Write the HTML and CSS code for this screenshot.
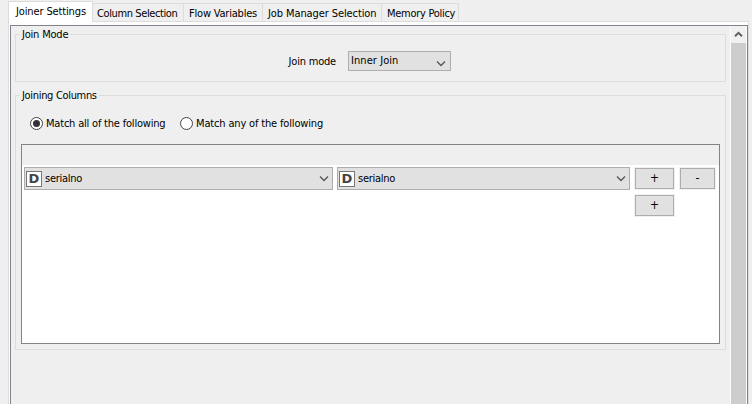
FILE: index.html
```html
<!DOCTYPE html>
<html lang="en">
<head>
<meta charset="utf-8">
<title>Joiner Settings</title>
<link rel="stylesheet" href="styles.css">
</head>
<body>
<div class="dialog">
  <nav class="tabs">
    <div class="tab active"><span class="t-settings">Joiner Settings</span></div>
    <div class="tab w-column"><span class="t-column">Column Selection</span></div>
    <div class="tab w-flow"><span class="t-flow">Flow Variables</span></div>
    <div class="tab w-job"><span class="t-job">Job Manager Selection</span></div>
    <div class="tab w-memory"><span class="t-memory">Memory Policy</span></div>
  </nav>
  <div class="pane">
    <div class="viewport">
      <main class="content">
        <section class="group mode">
          <h2>Join Mode</h2>
          <label>Join mode</label>
          <div class="combo small"><span>Inner Join</span><svg class="chevron" width="10" height="7" viewBox="0 0 10 7"><path d="M1 1.5 5 5.5 9 1.5"/></svg></div>
        </section>
        <section class="group columns">
          <h2>Joining Columns</h2>
          <div class="radios">
            <label class="radio"><svg width="13" height="13" viewBox="0 0 13 13"><circle class="ring" cx="6.5" cy="6.5" r="6"/><circle class="dot" cx="6.5" cy="6.5" r="3.5"/></svg><span>Match all of the following</span></label>
            <label class="radio any"><svg width="13" height="13" viewBox="0 0 13 13"><circle class="ring" cx="6.5" cy="6.5" r="6"/></svg><span>Match any of the following</span></label>
          </div>
          <div class="table">
            <div class="table-head"></div>
            <div class="row">
              <div class="combo left"><i class="type">D</i><span>serialno</span><svg class="chevron" width="10" height="7" viewBox="0 0 10 7"><path d="M1 1.5 5 5.5 9 1.5"/></svg></div>
              <div class="combo right"><i class="type">D</i><span>serialno</span><svg class="chevron" width="10" height="7" viewBox="0 0 10 7"><path d="M1 1.5 5 5.5 9 1.5"/></svg></div>
              <div class="button add">+</div>
              <div class="button remove">-</div>
            </div>
            <div class="row last"><div class="button add">+</div></div>
          </div>
        </section>
      </main>
      <aside class="scrollbar">
        <div class="up"><svg width="9" height="7" viewBox="0 0 9 7"><path d="M1 5.3 4.5 1.8 8 5.3"/></svg></div>
        <div class="thumb"></div>
      </aside>
    </div>
  </div>
</div>
</body>
</html>
```
FILE: styles.css
```css
* { box-sizing: border-box; }
body {
  margin: 0;
  height: 404px;
  overflow: hidden;
  background: #efefef;
  color: #000;
  font: 11px/14px "DejaVu Sans Condensed", "DejaVu Sans", sans-serif;
  font-stretch: condensed;
  letter-spacing: -0.2px;
  white-space: nowrap;
}
.dialog { display: flex; flex-direction: column; width: 741px; height: 404px; margin-left: 8px; padding-top: 1px; }
.tabs { display: flex; align-items: flex-end; height: 21px; margin-bottom: -1px; z-index: 1; }
.tab { height: 19px; padding: 3px 0 0 5px; border: 1px solid #dcdcdc; border-left: 0; }
.tab.active { width: 85px; height: 21px; padding: 3px 0 0 7px; border-left: 1px solid #dcdcdc; border-bottom: 0; background: #fff; }
.tab.w-column { width: 91px; padding-left: 4px; }
.w-flow { width: 79px; }
.w-job { width: 119px; }
.w-memory { width: 77px; }
.t-settings { letter-spacing: -0.13px; }
.t-column { letter-spacing: -0.39px; }
.t-job { letter-spacing: -0.1px; }
.t-memory { letter-spacing: -0.28px; }
.pane { flex: 1; padding: 3px 0 0 1px; border: 1px solid #dcdcdc; border-bottom: 0; background: #fff; }
.viewport { display: flex; height: 100%; border: 1px solid #82828c; border-bottom: 0; background: #efefef; }
.content { width: 719px; padding: 8px 0 0 4px; }
.group { width: 711px; border: 1px solid #dcdcdc; }
h2 { width: max-content; height: 14px; margin: -7px 0 0 4px; padding: 0 2px; background: #efefef; font: inherit; }
.mode { display: grid; grid-template-columns: 332px 103px; grid-template-rows: 9px 20px; row-gap: 7px; height: 48px; }
.mode h2 { grid-column: 1 / 3; }
.mode label { justify-self: end; margin-right: 12px; padding-top: 4px; }
.combo { display: flex; align-items: center; height: 23px; border: 1px solid #adadad; background: #e1e1e1; padding: 0 3px 0 1px; }
.combo span { letter-spacing: -0.28px; }
.combo.small { width: 103px; height: 20px; padding: 0 4px 0 2px; border-color: #adadb3; }
.combo.small span { letter-spacing: 0.07px; }
.chevron { margin-left: auto; }
.small .chevron { margin-top: 4px; }
.chevron path { fill: none; stroke: #555; stroke-width: 1.3; }
.columns { height: 255px; margin-top: 13px; }
.columns h2 { letter-spacing: -0.32px; }
.radios { display: flex; padding: 14px 0 0 14px; height: 41px; }
.radio { display: flex; width: 150px; height: 14px; gap: 3px; }
.any { letter-spacing: -0.16px; }
.ring { fill: #fff; stroke: #444; stroke-width: 1; }
.dot { fill: #333; }
.table { width: 699px; height: 200px; margin-left: 5px; border: 1px solid #828287; background: #fff; }
.table-head { height: 20px; background: #efefef; }
.row { display: flex; padding: 2px 0 0 2px; height: 29px; }
.left { width: 309px; margin-right: 4px; }
.right { width: 293px; margin-right: 5px; }
.type { width: 16px; height: 16px; margin-right: 3px; border: 1px solid #777; background: #fff; color: #444; font: bold 13px/14px "DejaVu Sans", sans-serif; text-align: center; letter-spacing: 0; }
.button { height: 21px; margin-top: 1px; border: 1px solid #adadad; background: #e1e1e1; box-shadow: 0 0 0 1px #f0f0f0; text-align: center; font-size: 12px; line-height: 19px; letter-spacing: 0; }
.add { width: 39px; margin-right: 6px; }
.remove { width: 35px; }
.row.last { padding: 0 0 0 613px; }
.scrollbar { display: flex; flex-direction: column; width: 17px; padding: 0 1px; background: #fbfbfb; }
.up { display: flex; justify-content: center; align-items: center; height: 17px; background: #f0f0f0; }
.up path { fill: none; stroke: #606060; stroke-width: 2; }
.thumb { flex: 1; background: #cdcdcd; }
```
